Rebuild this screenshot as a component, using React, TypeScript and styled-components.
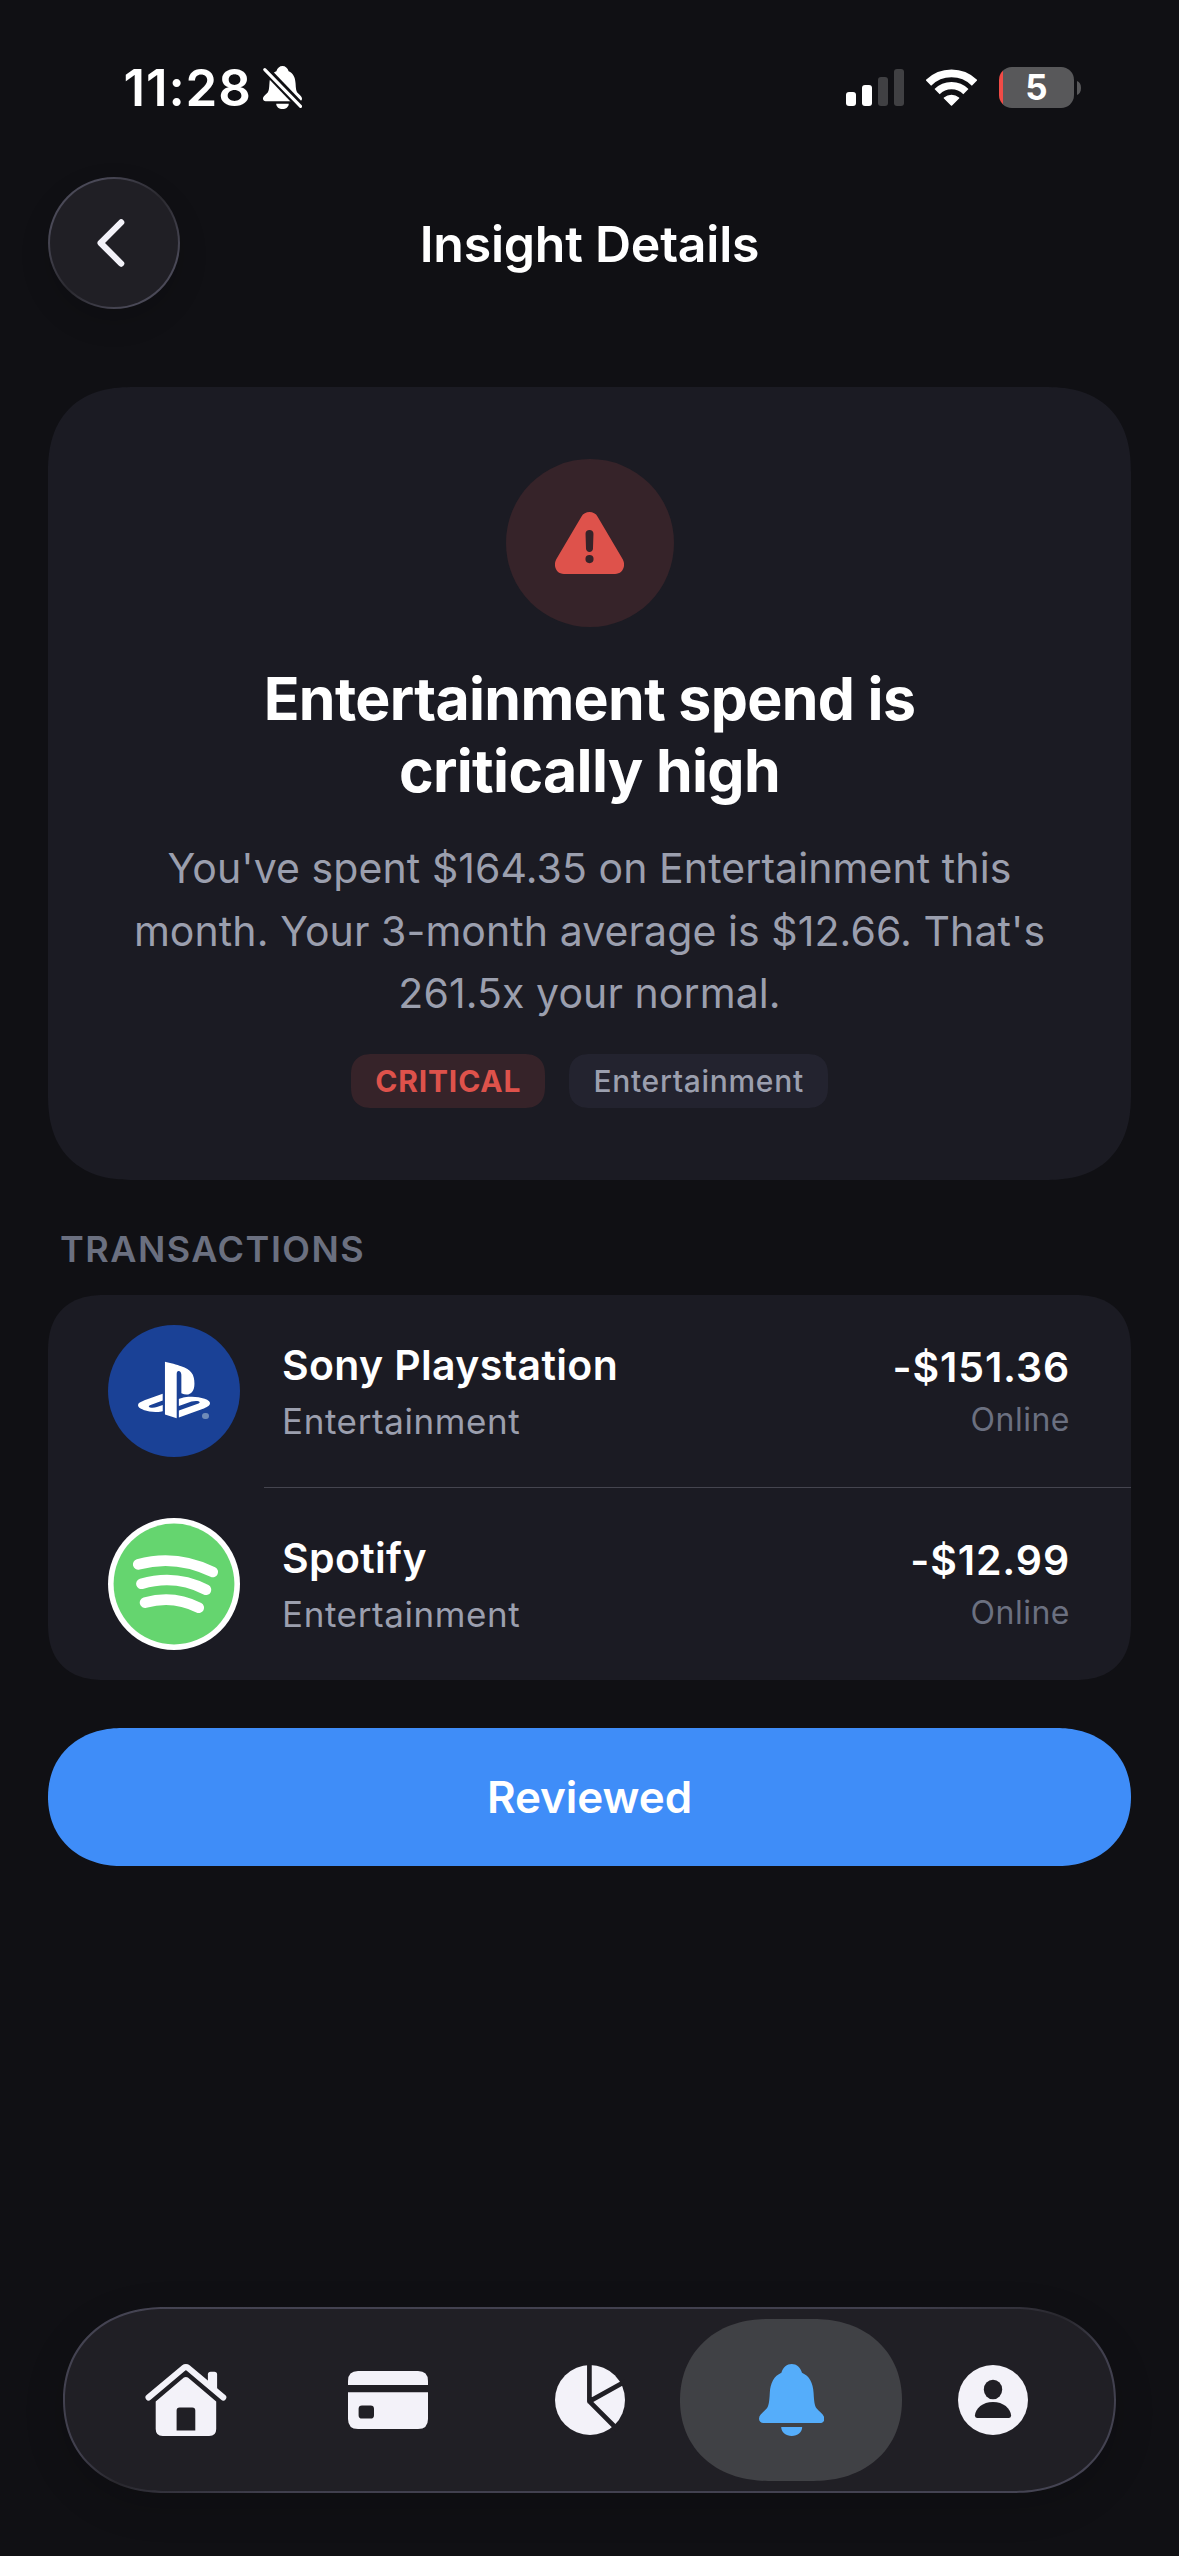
import React from "react";
import styled, { createGlobalStyle } from "styled-components";
import { SiPlaystation } from "react-icons/si";

const color = {
  page: "#101014",
  card: "#1b1b23",
  chrome: "#201f25",
  chip: "#23232f",
  text: "#ffffff",
  icon: "#f3f2f9",
  secondary: "#9b9fae",
  tertiary: "#6b7080",
  danger: "#de524b",
  dangerSoft: "#362329",
  accent: "#3f8df8",
  hairline: "#45454f",
};

const GlobalStyle = createGlobalStyle`
  *, *::before, *::after { box-sizing: border-box; }
  body { margin: 0; background: ${color.page}; }
  button { border: 0; padding: 0; font: inherit; color: inherit; background: none; }
  h1, h2, h3, p { margin: 0; font-weight: inherit; }
  svg { display: block; flex: none; }
`;

const Screen = styled.div`
  width: 1179px;
  height: 2556px;
  display: flex;
  flex-direction: column;
  overflow: hidden;
  background: ${color.page};
  color: ${color.text};
  font-family: Inter, "Liberation Sans", sans-serif;
`;

/* ---- status bar ---- */

const StatusBar = styled.div`
  height: 177px;
  padding: 0 98px 2px 123.5px;
  display: flex;
  align-items: center;
  justify-content: space-between;
  flex: none;
`;

const StatusGroup = styled.div<{ $gap: number }>`
  display: flex;
  align-items: center;
  gap: ${(p) => p.$gap}px;
`;

const Clock = styled.span`
  font-size: 51px;
  line-height: 60px;
  font-weight: 600;
  letter-spacing: 0.9px;
`;

const Battery = styled.div`
  display: flex;
  align-items: center;
  gap: 3px;
`;

const BatteryBody = styled.div`
  width: 75px;
  height: 41px;
  border-radius: 13px;
  display: flex;
  align-items: center;
  justify-content: center;
  background: linear-gradient(90deg, #f04b46 4px, #58585a 4px);
  font-size: 35px;
  line-height: 41px;
  font-weight: 700;
`;

/* ---- header ---- */

const Header = styled.header`
  height: 132px;
  padding: 0 48px;
  display: grid;
  grid-template-columns: 132px 1fr 132px;
  align-items: center;
  flex: none;
`;

const BackButton = styled.button`
  width: 132px;
  height: 132px;
  padding-right: 7px;
  border-radius: 50%;
  border: 2px solid transparent;
  display: flex;
  align-items: center;
  justify-content: center;
  background:
    linear-gradient(${color.chrome}, ${color.chrome}) padding-box,
    linear-gradient(135deg, #4a4957 20%, #2a292f 50%, #4a4957 80%) border-box;
  box-shadow: 0 12px 30px rgba(0, 0, 0, 0.14);
`;

const Title = styled.h1`
  text-align: center;
  font-size: 50px;
  line-height: 60px;
  font-weight: 600;
  letter-spacing: -0.23px;
  padding-top: 2px;
`;

/* ---- content ---- */

const Content = styled.main`
  padding: 78px 48px 0;
  display: flex;
  flex-direction: column;
`;

const InsightCard = styled.section`
  padding: 72px 36px;
  border-radius: 86px;
  corner-shape: superellipse(1.27);
  background: ${color.card};
  display: flex;
  flex-direction: column;
  align-items: center;
  text-align: center;
`;

const AlertBadge = styled.div`
  width: 168px;
  height: 168px;
  border-radius: 50%;
  background: ${color.dangerSoft};
  display: flex;
  align-items: center;
  justify-content: center;
`;

const Headline = styled.h2`
  margin-top: 36px;
  width: 720px;
  font-size: 59px;
  line-height: 72px;
  font-weight: 700;
  letter-spacing: -0.67px;
`;

const Summary = styled.p`
  margin-top: 30px;
  width: 940px;
  font-size: 41px;
  line-height: 62.5px;
  letter-spacing: 0.08px;
  color: ${color.secondary};
`;

const Tags = styled.div`
  margin-top: 29.5px;
  display: flex;
  gap: 24px;
`;

const Tag = styled.span<{ $critical?: boolean }>`
  height: 54px;
  padding: 0 24px;
  border-radius: 21px;
  corner-shape: superellipse(1.27);
  display: flex;
  align-items: center;
  font-size: 30px;
  line-height: 36px;
  font-weight: ${(p) => (p.$critical ? 700 : 500)};
  letter-spacing: ${(p) => (p.$critical ? 0.85 : 0.7)}px;
  color: ${(p) => (p.$critical ? color.danger : color.secondary)};
  background: ${(p) => (p.$critical ? color.dangerSoft : color.chip)};
`;

const SectionLabel = styled.h3`
  margin: 48px 0 24px;
  padding-left: 12px;
  font-size: 36px;
  line-height: 43px;
  font-weight: 600;
  letter-spacing: 1.5px;
  color: ${color.tertiary};
`;

const List = styled.section`
  border-radius: 57px;
  corner-shape: superellipse(1.27);
  background: ${color.card};
  overflow: hidden;
`;

const Row = styled.div`
  height: 192px;
  padding: 0 61px 0 60px;
  display: flex;
  align-items: center;
`;

const Divider = styled.div`
  height: 1px;
  margin-left: 216px;
  background: ${color.hairline};
`;

const Avatar = styled.div<{ $bg: string }>`
  width: 132px;
  height: 132px;
  margin-right: 42px;
  border-radius: 50%;
  background: ${(p) => p.$bg};
  display: flex;
  align-items: center;
  justify-content: center;
  flex: none;
`;

const Merchant = styled.div`
  flex: 1;
  display: flex;
  flex-direction: column;
  gap: 10px;
`;

const MerchantName = styled.span`
  font-size: 41px;
  line-height: 50px;
  font-weight: 600;
  letter-spacing: 0.34px;
`;

const Category = styled.span`
  font-size: 35px;
  line-height: 43px;
  letter-spacing: 0.6px;
  color: ${color.secondary};
`;

const Money = styled.div`
  display: flex;
  flex-direction: column;
  align-items: flex-end;
  gap: 8px;
`;

const Amount = styled.span`
  font-size: 41px;
  line-height: 50px;
  font-weight: 600;
  letter-spacing: 0.85px;
`;

const Channel = styled.span`
  font-size: 32px;
  line-height: 40px;
  letter-spacing: 0.5px;
  color: ${color.tertiary};
`;

const PrimaryButton = styled.button`
  margin-top: 48px;
  height: 138px;
  border-radius: 74px / 69px;
  corner-shape: superellipse(1.1);
  background: ${color.accent};
  font-size: 44px;
  line-height: 54px;
  font-weight: 600;
  letter-spacing: -0.08px;
`;

/* ---- tab bar ---- */

const TabBar = styled.nav`
  margin: auto 63px 63px;
  height: 186px;
  padding: 0 10px;
  border: 2px solid transparent;
  border-radius: 101px / 93px;
  corner-shape: superellipse(1.1);
  display: flex;
  align-items: center;
  justify-content: space-between;
  flex: none;
  background:
    linear-gradient(${color.chrome}, ${color.chrome}) padding-box,
    linear-gradient(to bottom right, #454453 0%, #403f4d 40%, #28272d 50%, #403f4d 60%, #454453 100%) border-box;
  box-shadow: 0 12px 40px rgba(0, 0, 0, 0.16);
`;

const Tab = styled.button<{ $active?: boolean }>`
  width: 222px;
  height: 162px;
  margin-right: -20.25px;
  border-radius: 88px / 81px;
  corner-shape: superellipse(1.1);
  display: flex;
  align-items: center;
  justify-content: center;
  background: ${(p) => (p.$active ? "#404145" : "transparent")};
  &:last-child { margin-right: 0; }
`;

/* ---- drawings ---- */

const BELL =
  "M32.7 0C37.5 0 41.3 3.4 43 8.7C50.4 12 54 18.5 54.6 29C55.1 38 55.6 41.5 57.5 44.3C60.6 48.3 65.4 50.3 65.4 54.8C65.4 57.4 63.5 59 61 59H4.4C1.9 59 0 57.4 0 54.8C0 50.3 4.8 48.3 7.9 44.3C9.8 41.5 10.3 38 10.8 29C11.4 18.5 15 12 22.4 8.7C24.1 3.4 27.9 0 32.7 0Z";
const CLAPPER = "M22.2 63H43.2C43 68.4 38.6 72 32.7 72S22.4 68.4 22.2 63Z";

const BellSlashIcon = () => (
  <svg width="39" height="43" viewBox="0 0 65.4 72" preserveAspectRatio="none">
    <path d={BELL} fill="#fff" />
    <path d={CLAPPER} fill="#fff" />
    <path d="M-2 -0.5L68 72.5" stroke={color.page} strokeWidth="13.5" />
    <path d="M3 6L63 67.5" stroke="#fff" strokeWidth="5.2" strokeLinecap="round" />
  </svg>
);

const SignalIcon = () => (
  <svg width="58" height="37" viewBox="0 0 58 37">
    <rect x="0" y="23" width="10" height="14" rx="3" fill="#fff" />
    <rect x="16" y="16" width="10" height="21" rx="3" fill="#fff" />
    <rect x="32" y="8" width="10" height="29" rx="3" fill="#404043" />
    <rect x="48" y="0" width="10" height="37" rx="3" fill="#404043" />
  </svg>
);

const WifiIcon = () => (
  <svg width="51" height="37" viewBox="0 0 51 37" fill="none" stroke="#fff">
    <path d="M2.4 13.9A32.9 32.9 0 0 1 48.6 13.9" strokeWidth="7.8" />
    <path d="M11.1 22.6A20.4 20.4 0 0 1 39.9 22.6" strokeWidth="7.3" />
    <path d="M25.5 36L18.5 29A11 11 0 0 1 32.5 29Z" fill="#fff" strokeWidth="1.6" strokeLinejoin="round" />
  </svg>
);

const BatteryNub = () => (
  <svg width="4" height="14" viewBox="0 0 4 14">
    <path d="M0 0C2.6 1 4 3.6 4 7S2.6 13 0 14Z" fill="#58585a" />
  </svg>
);

const ChevronIcon = () => (
  <svg width="28" height="48" viewBox="0 0 28 48">
    <path d="M24.2 3.4L3.6 24L24.2 44.6" fill="none" stroke={color.icon} strokeWidth="6.2" strokeLinecap="round" strokeLinejoin="round" />
  </svg>
);

const WarningIcon = () => (
  <svg width="69" height="62" viewBox="0 0 69.6 62.4">
    <path
      d="M26.6 4.6C30 -1.5 39.6 -1.5 43 4.6L68.3 47.6C72 54.2 68 62.4 60.6 62.4H9C1.6 62.4 -2.4 54.2 1.3 47.6Z"
      fill={color.danger}
    />
    <path d="M34.8 18C37.2 18 38.9 19.5 38.8 21.8L38.3 37C38.2 39 36.8 40.2 34.8 40.2S31.4 39 31.3 37L30.8 21.8C30.7 19.5 32.4 18 34.8 18Z" fill={color.dangerSoft} />
    <circle cx="34.8" cy="47.4" r="4.1" fill={color.dangerSoft} />
  </svg>
);

const PlaystationMark = styled.span`
  display: flex;
  position: relative;
  top: -1px;
  &::after {
    content: "";
    position: absolute;
    right: 1.5px;
    bottom: 7px;
    width: 6.5px;
    height: 6.5px;
    border-radius: 50%;
    background: #6f8bb8;
  }
`;

const SpotifyIcon = () => (
  <svg width="132" height="132" viewBox="0 0 132 132" fill="none" stroke="#fff" strokeLinecap="round" strokeWidth="10.6">
    <circle cx="66" cy="66" r="60.4" fill="#65d56f" stroke="none" />
    <path d="M30.2 46.4Q67.5 36 104.8 54" />
    <path d="M33.4 65.8Q67.5 56 98 71.8" />
    <path d="M37 84.6Q65.5 76.6 90.8 89.8" />
  </svg>
);

const HomeIcon = () => (
  <svg width="82" height="72" viewBox="0 0 82 72">
    <path d="M62.9 24V10.5Q62.9 7.7 65.7 7.7H69.3Q72.1 7.7 72.1 10.5V30Z" fill={color.icon} />
    <path d="M3.6 33.4L38.6 4Q40.9 2.4 43.2 4L78.2 33.4" fill="none" stroke={color.icon} strokeWidth="6.2" strokeLinecap="round" strokeLinejoin="round" />
    <path
      fillRule="evenodd"
      d="M10.7 37.4L38.9 13.6Q40.9 12.2 42.9 13.6L71.2 37.4V65Q71.2 72 64.2 72H17.7Q10.7 72 10.7 65ZM31.6 66.6H50.3V46.4Q50.3 43.4 47.3 43.4H34.6Q31.6 43.4 31.6 46.4Z"
      fill={color.icon}
    />
  </svg>
);

const CardIcon = () => (
  <svg width="80" height="58" viewBox="0 0 80 58" fill={color.icon}>
    <path d="M0 13.9V10Q0 0 10 0H70Q80 0 80 10V13.9Z" />
    <path
      fillRule="evenodd"
      d="M0 21.2H80V48Q80 58 70 58H10Q0 58 0 48ZM14 34.4Q10.6 34.4 10.6 37.8V44.2Q10.6 47.6 14 47.6H22.6Q26 47.6 26 44.2V37.8Q26 34.4 22.6 34.4Z"
    />
  </svg>
);

const PieIcon = () => (
  <svg width="70" height="70" viewBox="0 0 70 70">
    <circle cx="35" cy="35" r="35" fill={color.icon} />
    <path d="M34.4 -2V36.4L71 16M34.4 36.4L63 65" fill="none" stroke={color.chrome} strokeWidth="4.7" strokeLinejoin="round" />
  </svg>
);

const BellIcon = () => (
  <svg width="65.4" height="72" viewBox="0 0 65.4 72" fill="#55adfa">
    <path d={BELL} />
    <path d={CLAPPER} />
  </svg>
);

const PersonIcon = () => (
  <svg width="70" height="70" viewBox="0 0 70 70">
    <circle cx="35" cy="35" r="35" fill={color.icon} />
    <ellipse cx="35" cy="24.5" rx="9.2" ry="9.8" fill={color.chrome} />
    <path d="M19 53Q16.8 53 16.9 50.6C17.4 43.4 24.6 37 35 37S52.6 43.4 53.1 50.6Q53.2 53 51 53Z" fill={color.chrome} />
  </svg>
);

/* ---- data ---- */

const transactions = [
  {
    name: "Sony Playstation",
    category: "Entertainment",
    amount: "-$151.36",
    channel: "Online",
    background: "#1a4196",
    logo: (
      <PlaystationMark>
        <SiPlaystation size={72} />
      </PlaystationMark>
    ),
  },
  {
    name: "Spotify",
    category: "Entertainment",
    amount: "-$12.99",
    channel: "Online",
    background: "#ffffff",
    logo: <SpotifyIcon />,
  },
];

const tabs = [
  { id: "Home", icon: <HomeIcon /> },
  { id: "Accounts", icon: <CardIcon /> },
  { id: "Budget", icon: <PieIcon /> },
  { id: "Insights", icon: <BellIcon /> },
  { id: "Profile", icon: <PersonIcon /> },
];

export default function App() {
  return (
    <>
      <GlobalStyle />
      <Screen>
        <StatusBar>
          <StatusGroup $gap={11}>
            <Clock>11:28</Clock>
            <BellSlashIcon />
          </StatusGroup>
          <StatusGroup $gap={22}>
            <SignalIcon />
            <WifiIcon />
            <Battery>
              <BatteryBody>5</BatteryBody>
              <BatteryNub />
            </Battery>
          </StatusGroup>
        </StatusBar>

        <Header>
          <BackButton>
            <ChevronIcon />
          </BackButton>
          <Title>Insight Details</Title>
        </Header>

        <Content>
          <InsightCard>
            <AlertBadge>
              <WarningIcon />
            </AlertBadge>
            <Headline>
              Entertainment spend is
              <br />
              critically high
            </Headline>
            <Summary>
              You've spent $164.35 on Entertainment this
              <br />
              month. Your 3-month average is $12.66. That's
              <br />
              261.5x your normal.
            </Summary>
            <Tags>
              <Tag $critical>CRITICAL</Tag>
              <Tag>Entertainment</Tag>
            </Tags>
          </InsightCard>

          <SectionLabel>TRANSACTIONS</SectionLabel>
          <List>
            {transactions.map((t, i) => (
              <React.Fragment key={t.name}>
                {i > 0 && <Divider />}
                <Row>
                  <Avatar $bg={t.background}>{t.logo}</Avatar>
                  <Merchant>
                    <MerchantName>{t.name}</MerchantName>
                    <Category>{t.category}</Category>
                  </Merchant>
                  <Money>
                    <Amount>{t.amount}</Amount>
                    <Channel>{t.channel}</Channel>
                  </Money>
                </Row>
              </React.Fragment>
            ))}
          </List>

          <PrimaryButton>Reviewed</PrimaryButton>
        </Content>

        <TabBar>
          {tabs.map((tab) => (
            <Tab key={tab.id} $active={tab.id === "Insights"}>
              {tab.icon}
            </Tab>
          ))}
        </TabBar>
      </Screen>
    </>
  );
}
